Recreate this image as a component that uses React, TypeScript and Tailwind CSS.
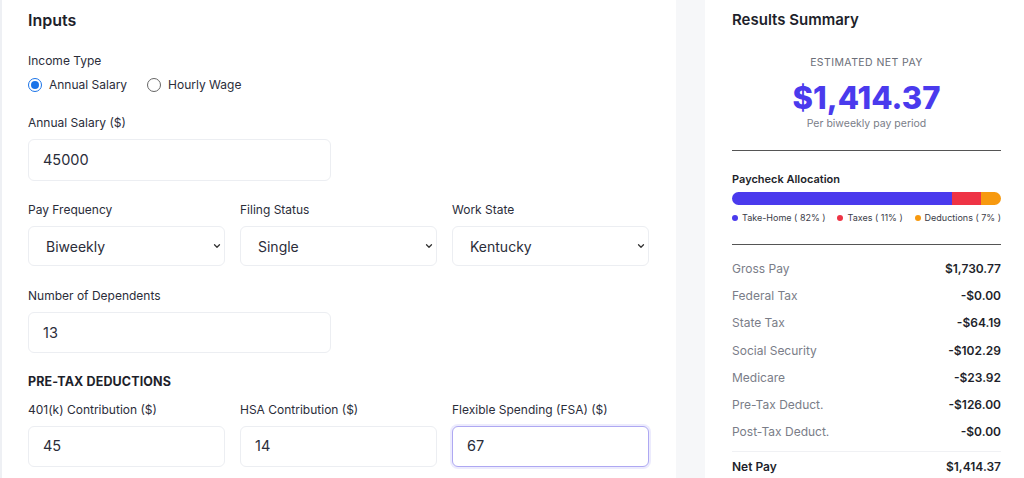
import { ChevronDown } from 'lucide-react'

const font = { fontFamily: 'Inter, "Noto Sans", sans-serif' }

function Label({ children }: { children: React.ReactNode }) {
  return <div className="text-[12px] text-[#2b2d3a] leading-none mb-[10px]">{children}</div>
}

function TextInput({ value, focused, className = '' }: { value: string; focused?: boolean; className?: string }) {
  return (
    <div
      className={`h-[41px] rounded-md border flex items-center px-[14px] text-[14.5px] text-[#2b2d3a] bg-white ${
        focused ? 'border-[#aea8f2] shadow-[0_0_0_2px_rgba(120,110,240,0.14)]' : 'border-[#eceef2]'
      } ${className}`}
    >
      {value}
    </div>
  )
}

function SelectBox({ value }: { value: string }) {
  return (
    <div className="h-[40px] rounded-md border border-[#eceef2] flex items-center justify-between pl-[17px] pr-[2px] text-[14px] text-[#2b2d3a] bg-white">
      <span>{value}</span>
      <ChevronDown size={10} strokeWidth={3} className="text-[#333]" />
    </div>
  )
}

function Row({ label, value, bold }: { label: string; value: string; bold?: boolean }) {
  return (
    <div className="flex justify-between items-center h-[27.3px]">
      <span className={bold ? 'text-[12px] font-semibold text-[#1e1f2b]' : 'text-[12px] text-[#7a7d88]'}>{label}</span>
      <span className="text-[12px] font-semibold text-[#1e1f2b]">{value}</span>
    </div>
  )
}

export default function App() {
  const rows = [
    ['Gross Pay', '$1,730.77'],
    ['Federal Tax', '-$0.00'],
    ['State Tax', '-$64.19'],
    ['Social Security', '-$102.29'],
    ['Medicare', '-$23.92'],
    ['Pre-Tax Deduct.', '-$126.00'],
    ['Post-Tax Deduct.', '-$0.00'],
  ]

  return (
    <div className="w-[1024px] h-[478px] overflow-hidden bg-[#f6f7f9] flex gap-[29px]" style={font}>
      {/* inputs card */}
      <div className="w-[676px] h-full bg-white border-l-2 border-[#eef0f4] pl-[26px] pr-[27px] pt-[11px]">
        <h2 className="text-[16px] font-semibold text-[#1e1f2b] leading-[18px]">Inputs</h2>

        <div className="mt-[26px]">
          <div className="text-[12px] text-[#2b2d3a] leading-none">Income Type</div>
          <div className="flex items-center gap-[20px] text-[12px] text-[#2b2d3a] mt-[10px] h-[16px]">
            <label className="flex items-center gap-[7px]">
              <span className="w-[14px] h-[14px] rounded-full border border-[#1a73e8] flex items-center justify-center">
                <span className="w-[8px] h-[8px] rounded-full bg-[#1a73e8]" />
              </span>
              Annual Salary
            </label>
            <label className="flex items-center gap-[7px]">
              <span className="w-[14px] h-[14px] rounded-full border border-[#666]" />
              Hourly Wage
            </label>
          </div>
        </div>

        <div className="mt-[24px]">
          <Label>Annual Salary ($)</Label>
          <TextInput value="45000" className="w-[303px] h-[42px]" />
        </div>

        <div className="grid grid-cols-3 gap-[15px] mt-[23px]">
          <div>
            <Label>Pay Frequency</Label>
            <SelectBox value="Biweekly" />
          </div>
          <div>
            <Label>Filing Status</Label>
            <SelectBox value="Single" />
          </div>
          <div>
            <Label>Work State</Label>
            <SelectBox value="Kentucky" />
          </div>
        </div>

        <div className="mt-[24px]">
          <Label>Number of Dependents</Label>
          <TextInput value="13" className="w-[303px]" />
        </div>

        <div className="mt-[23px] text-[12.5px] font-bold text-[#1e1f2b] tracking-[0.01em] leading-none">PRE-TAX DEDUCTIONS</div>

        <div className="grid grid-cols-3 gap-[15px] mt-[15px]">
          <div>
            <Label>401(k) Contribution ($)</Label>
            <TextInput value="45" />
          </div>
          <div>
            <Label>HSA Contribution ($)</Label>
            <TextInput value="14" />
          </div>
          <div>
            <Label>Flexible Spending (FSA) ($)</Label>
            <TextInput value="67" focused />
          </div>
        </div>
      </div>

      {/* results card */}
      <div className="flex-1 h-full bg-white pl-[27px] pr-[23px] pt-[11px]">
        <h2 className="text-[15px] font-semibold text-[#1e1f2b] leading-[18px]">Results Summary</h2>

        <div className="text-center mt-[29px]">
          <div className="text-[10.5px] tracking-[0.04em] text-[#6b6e78] leading-none">ESTIMATED NET PAY</div>
          <div className="text-[31px] font-extrabold text-[#4a3aed] leading-none mt-[13px]">$1,414.37</div>
          <div className="text-[10.5px] text-[#7a7d88] leading-none mt-[6px]">Per biweekly pay period</div>
        </div>

        <div className="border-t border-[#555] mt-[21px]" />

        <div className="mt-[23px] text-[11px] font-semibold text-[#1e1f2b] leading-none">Paycheck Allocation</div>
        <div className="flex h-[13px] rounded-full overflow-hidden mt-[7px]">
          <div className="bg-[#4a3aed]" style={{ width: '81.6%' }} />
          <div className="bg-[#ee3345]" style={{ width: '10.9%' }} />
          <div className="bg-[#f7990f] flex-1" />
        </div>
        <div className="flex justify-between items-center text-[9px] text-[#3a3c48] mt-[8px] leading-none">
          <span className="flex items-center gap-[4px]">
            <span className="w-[6px] h-[6px] rounded-full bg-[#4a3aed]" />Take-Home ( 82% )
          </span>
          <span className="flex items-center gap-[4px]">
            <span className="w-[6px] h-[6px] rounded-full bg-[#ee3345]" />Taxes ( 11% )
          </span>
          <span className="flex items-center gap-[4px]">
            <span className="w-[6px] h-[6px] rounded-full bg-[#f7990f]" />Deductions ( 7% )
          </span>
        </div>

        <div className="border-t border-[#555] mt-[22px]" />

        <div className="mt-[10px]">
          {rows.map(([l, v]) => (
            <Row key={l} label={l} value={v} />
          ))}
          <div className="border-t border-[#f0f1f4] mt-[5px]" />
          <div className="pt-[1px]">
            <Row label="Net Pay" value="$1,414.37" bold />
          </div>
        </div>
      </div>
    </div>
  )
}
